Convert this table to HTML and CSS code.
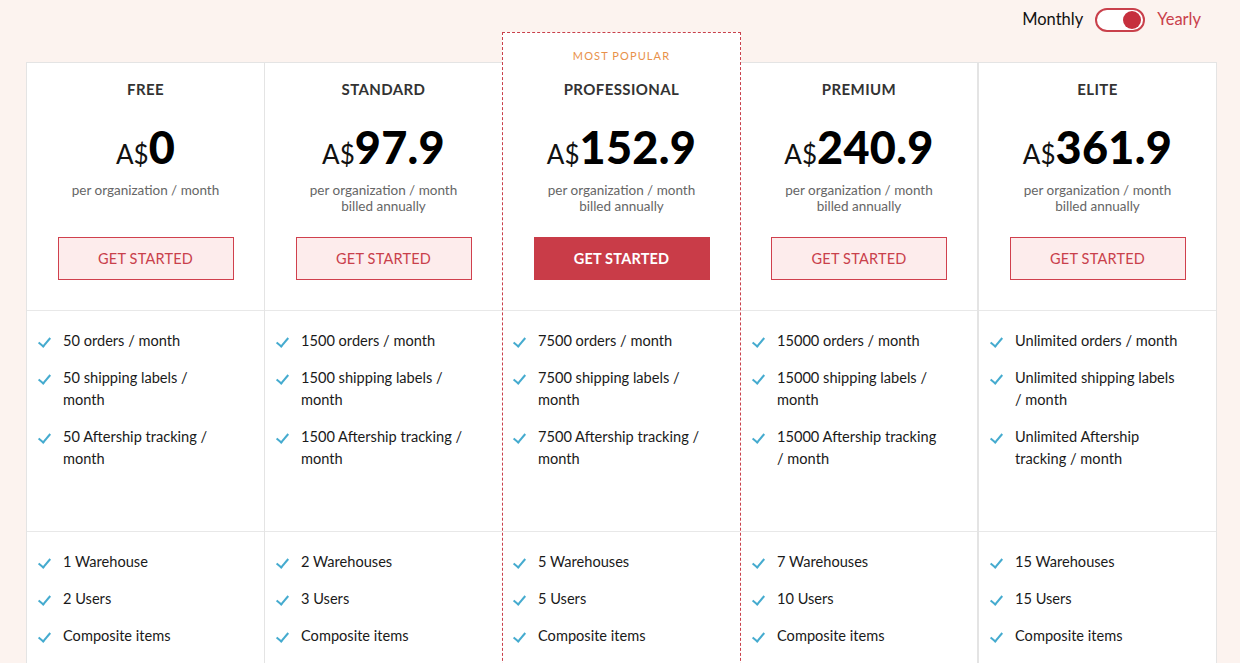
FILE: index.html
```html
<!DOCTYPE html>
<html lang="en">
<head>
<meta charset="utf-8">
<title>Pricing</title>
<link rel="stylesheet" href="styles.css">
</head>
<body>
<div class="page">
  <div class="topbar">
    <span class="period">Monthly</span>
    <span class="toggle"><span class="knob"></span></span>
    <span class="period active">Yearly</span>
  </div>

  <div class="plans">
    <!-- FREE -->
    <div class="plan first">
      <div class="badge"></div>
      <div class="card">
        <div class="head">
          <div class="name">FREE</div>
          <div class="price"><span class="cur">A$</span><span class="amt">0</span></div>
          <div class="per">per organization / month</div>
          <button class="cta">GET STARTED</button>
        </div>
        <ul class="feats top">
          <li>50 orders / month</li>
          <li>50 shipping labels / month</li>
          <li>50 Aftership tracking / month</li>
        </ul>
        <ul class="feats bottom">
          <li>1 Warehouse</li>
          <li>2 Users</li>
          <li>Composite items</li>
        </ul>
      </div>
    </div>

    <!-- STANDARD -->
    <div class="plan">
      <div class="badge"></div>
      <div class="card">
        <div class="head">
          <div class="name">STANDARD</div>
          <div class="price"><span class="cur">A$</span><span class="amt">97.9</span></div>
          <div class="per">per organization / month<br>billed annually</div>
          <button class="cta">GET STARTED</button>
        </div>
        <ul class="feats top">
          <li>1500 orders / month</li>
          <li>1500 shipping labels / month</li>
          <li>1500 Aftership tracking / month</li>
        </ul>
        <ul class="feats bottom">
          <li>2 Warehouses</li>
          <li>3 Users</li>
          <li>Composite items</li>
        </ul>
      </div>
    </div>

    <!-- PROFESSIONAL -->
    <div class="plan popular">
      <div class="badge">MOST POPULAR</div>
      <div class="card">
        <div class="head">
          <div class="name">PROFESSIONAL</div>
          <div class="price"><span class="cur">A$</span><span class="amt">152.9</span></div>
          <div class="per">per organization / month<br>billed annually</div>
          <button class="cta solid">GET STARTED</button>
        </div>
        <ul class="feats top">
          <li>7500 orders / month</li>
          <li>7500 shipping labels / month</li>
          <li>7500 Aftership tracking / month</li>
        </ul>
        <ul class="feats bottom">
          <li>5 Warehouses</li>
          <li>5 Users</li>
          <li>Composite items</li>
        </ul>
      </div>
    </div>

    <!-- PREMIUM -->
    <div class="plan after-popular">
      <div class="badge"></div>
      <div class="card">
        <div class="head">
          <div class="name">PREMIUM</div>
          <div class="price"><span class="cur">A$</span><span class="amt">240.9</span></div>
          <div class="per">per organization / month<br>billed annually</div>
          <button class="cta">GET STARTED</button>
        </div>
        <ul class="feats top">
          <li>15000 orders / month</li>
          <li>15000 shipping labels / month</li>
          <li>15000 Aftership tracking / month</li>
        </ul>
        <ul class="feats bottom">
          <li>7 Warehouses</li>
          <li>10 Users</li>
          <li>Composite items</li>
        </ul>
      </div>
    </div>

    <!-- ELITE -->
    <div class="plan last">
      <div class="badge"></div>
      <div class="card">
        <div class="head">
          <div class="name">ELITE</div>
          <div class="price"><span class="cur">A$</span><span class="amt">361.9</span></div>
          <div class="per">per organization / month<br>billed annually</div>
          <button class="cta">GET STARTED</button>
        </div>
        <ul class="feats top">
          <li>Unlimited orders / month</li>
          <li>Unlimited shipping labels / month</li>
          <li>Unlimited Aftership tracking / month</li>
        </ul>
        <ul class="feats bottom">
          <li>15 Warehouses</li>
          <li>15 Users</li>
          <li>Composite items</li>
        </ul>
      </div>
    </div>
  </div>
</div>
</body>
</html>
```

FILE: styles.css
```css
* { box-sizing: border-box; }

html, body {
  margin: 0;
  padding: 0;
  background: #fcf3ef;
  font-family: Lato, "Open Sans", "Liberation Sans", sans-serif;
  color: #222;
}

.page {
  height: 663px;
  overflow: hidden;
}

.topbar {
  height: 32px;
  display: flex;
  align-items: center;
  justify-content: flex-end;
  padding: 0 39px 0 0;
  gap: 12px;
}

.period {
  font-size: 16.5px;
  color: #111;
  line-height: 24px;
  padding-top: 6px;
}
.period.active { color: #c9404b; }

.toggle {
  margin-top: 8px;
  width: 50px;
  height: 24px;
  border: 2px solid #c9404b;
  border-radius: 12px;
  background: #fff;
  display: flex;
  align-items: center;
  justify-content: flex-end;
  padding-right: 2px;
}
.knob {
  width: 18px;
  height: 18px;
  border-radius: 50%;
  background: #c62f3d;
}

.plans {
  display: flex;
  margin-left: 26px;
  width: 1191px;
}

.plan {
  flex: 0 0 238px;
  display: flex;
  flex-direction: column;
}
.plan.popular { flex-basis: 239px; }
.plan.last { flex-basis: 239px; }
.plan.after-popular { flex-basis: 237px; }

.badge {
  height: 30px;
  font-size: 11px;
  letter-spacing: 1.1px;
  color: #e8914a;
  text-align: center;
  line-height: 14px;
  padding-top: 17px;
}

.card {
  flex: 1;
  background: #fff;
  border-left: 1px solid #e4e4e4;
}
.plan.after-popular .card {
  border-left: none;
  border-right: 1px solid #e4e4e4;
}
.plan.last .card {
  border-right: 1px solid #e4e4e4;
}

.plan.popular {
  background: #fff;
  border: 1px dashed #c9404b;
  border-bottom: none;
}
.plan.popular .badge { height: 29px; padding-top: 16px; }
.plan.popular .card { border-left: none; }

.head {
  height: 248px;
  border-top: 1px solid #e4e4e4;
  text-align: center;
  padding-top: 16px;
}
.plan.popular .head { border-top-color: transparent; }

.name {
  font-size: 15px;
  line-height: 20px;
  font-weight: 700;
  color: #333;
  letter-spacing: 0.4px;
}

.price {
  margin-top: 23px;
  height: 50px;
  line-height: 50px;
  white-space: nowrap;
}
.cur {
  font-size: 26px;
  color: #111;
}
.amt {
  font-size: 45px;
  font-weight: 900;
  color: #000;
  letter-spacing: 0.3px;
}

.per {
  margin-top: 10px;
  font-size: 13.5px;
  line-height: 16px;
  color: #666;
  height: 32px;
}

.cta {
  display: block;
  margin: 23px auto 0;
  width: 176px;
  height: 43px;
  border: 1px solid #d0404d;
  background: #fdecec;
  color: #c9404b;
  font-family: inherit;
  font-size: 14.5px;
  letter-spacing: 0.2px;
  cursor: pointer;
}
.cta.solid {
  background: #c93c48;
  border-color: #c93c48;
  color: #fff;
  font-weight: 700;
}

.feats {
  list-style: none;
  margin: 0;
  padding: 19px 35px 0 36px;
  border-top: 1px solid #e8e8e8;
  display: flex;
  flex-direction: column;
  gap: 15px;
}
.plan.popular .feats { padding-left: 35px; }
.feats.top { height: 221px; }
.feats.bottom { height: 200px; }

.feats li {
  position: relative;
  font-size: 14.6px;
  line-height: 22px;
  color: #1a1a1a;
}
.feats li::before {
  content: "";
  position: absolute;
  left: -22px;
  top: 5px;
  width: 5px;
  height: 10px;
  border-right: 2px solid #45abcf;
  border-bottom: 2px solid #45abcf;
  transform: rotate(40deg);
}
```
